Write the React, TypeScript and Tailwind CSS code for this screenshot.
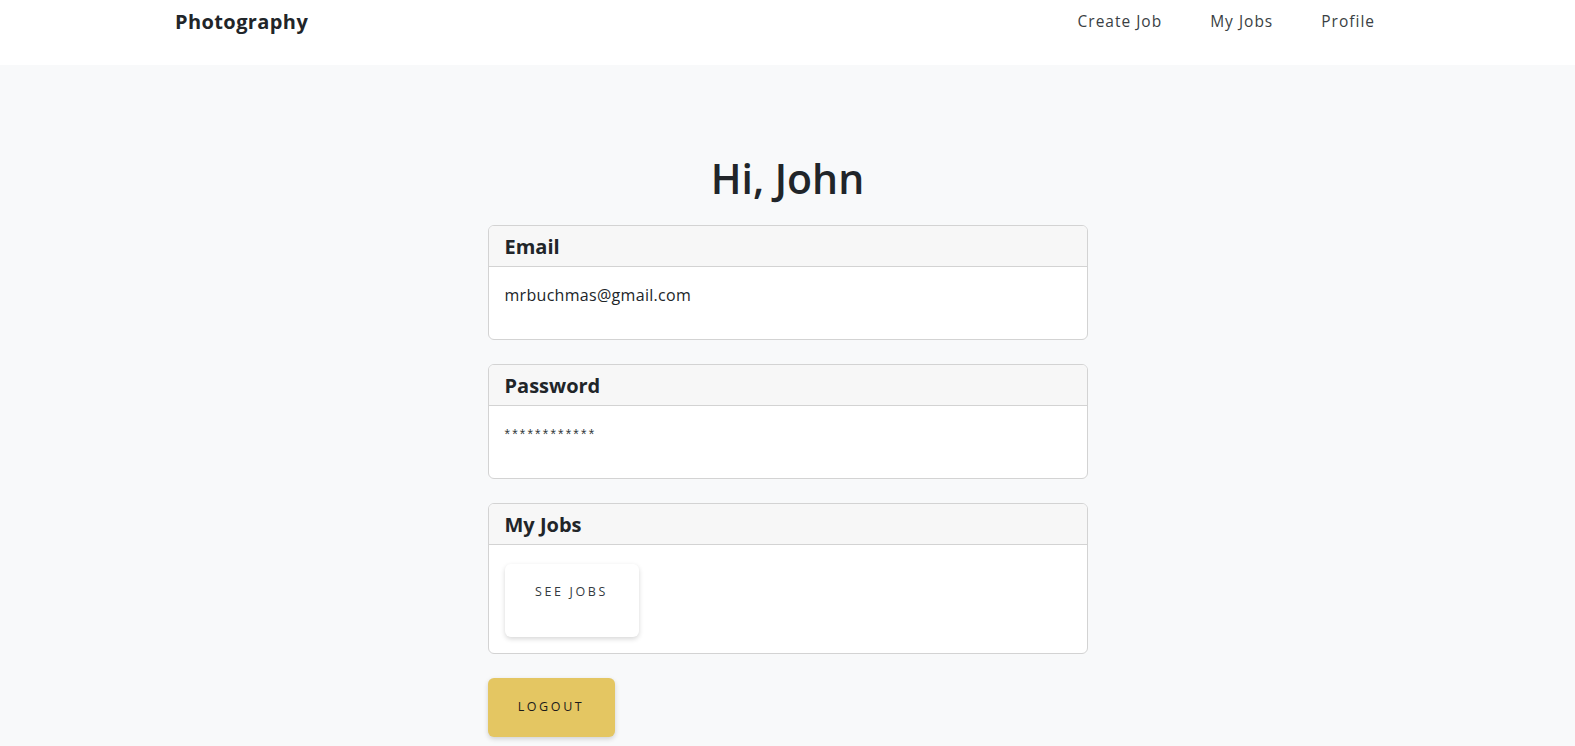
import React from "react";

const font = { fontFamily: '"Open Sans", "Noto Sans", sans-serif' };

function Card({ title, children, bodyClass }: { title: string; children: React.ReactNode; bodyClass?: string }) {
  return (
    <div className="w-[600px] rounded-[6px] border border-[#d3d3d3] bg-white overflow-hidden">
      <div className="h-[41px] border-b border-[#d3d3d3] bg-[#f7f7f7] px-4 pt-[9px] pb-[7px]">
        <h5 className="text-[20px] leading-[24px] font-bold text-[#212529]">{title}</h5>
      </div>
      <div className={bodyClass ?? "px-4 pt-4 pb-4"}>{children}</div>
    </div>
  );
}

export default function App() {
  return (
    <div className="min-h-[746px] bg-[#f8f9fa] text-[#212529]" style={font}>
      <header className="h-[65px] bg-white">
        <div className="mx-auto flex w-[1225px] items-start justify-between pt-[7px]">
          <a className="text-[20px] leading-[30px] font-bold tracking-[0.4px] text-[#212529]">Photography</a>
          <nav className="flex items-center pt-[2px]">
            <a className="px-6 text-[15.5px] leading-[24px] tracking-[1px] text-[#3a3f44]">Create Job</a>
            <a className="px-6 text-[15.5px] leading-[24px] tracking-[1px] text-[#3a3f44]">My Jobs</a>
            <a className="pl-6 pr-[25px] text-[15.5px] leading-[24px] tracking-[1px] text-[#3a3f44]">Profile</a>
          </nav>
        </div>
      </header>
      <main className="flex flex-col items-center pt-[89px] pb-4">
        <h1 className="mb-[23px] text-[41px] leading-[48px] font-semibold text-[#212529]">Hi, John</h1>
        <div className="flex flex-col gap-6">
          <Card title="Email">
            <p className="mb-4 text-[16px] leading-[24px] tracking-[0.3px]">mrbuchmas@gmail.com</p>
          </Card>
          <Card title="Password">
            <p
              className="mb-4 text-[14px] leading-[24px] tracking-[2.2px] text-[#343a40]"
              style={{ fontFamily: '"Liberation Sans", Arial, sans-serif' }}
            >
              ************
            </p>
          </Card>
          <Card title="My Jobs" bodyClass="px-4 pt-[19px] pb-4">
            <button className="flex h-[73px] w-[134px] items-start justify-center rounded-[6px] bg-white pt-[19px] text-[12.5px] tracking-[2.6px] text-[#343a40] shadow-[0_2px_5px_rgba(0,0,0,0.16)]">
              SEE JOBS
            </button>
          </Card>
          <div>
            <button className="flex h-[59px] w-[127px] items-center justify-center rounded-[6px] bg-[#e4c662] text-[12.5px] tracking-[2.6px] text-[#1a1a1a] shadow-[0_2px_5px_rgba(0,0,0,0.16)]">
              LOGOUT
            </button>
          </div>
        </div>
      </main>
    </div>
  );
}
